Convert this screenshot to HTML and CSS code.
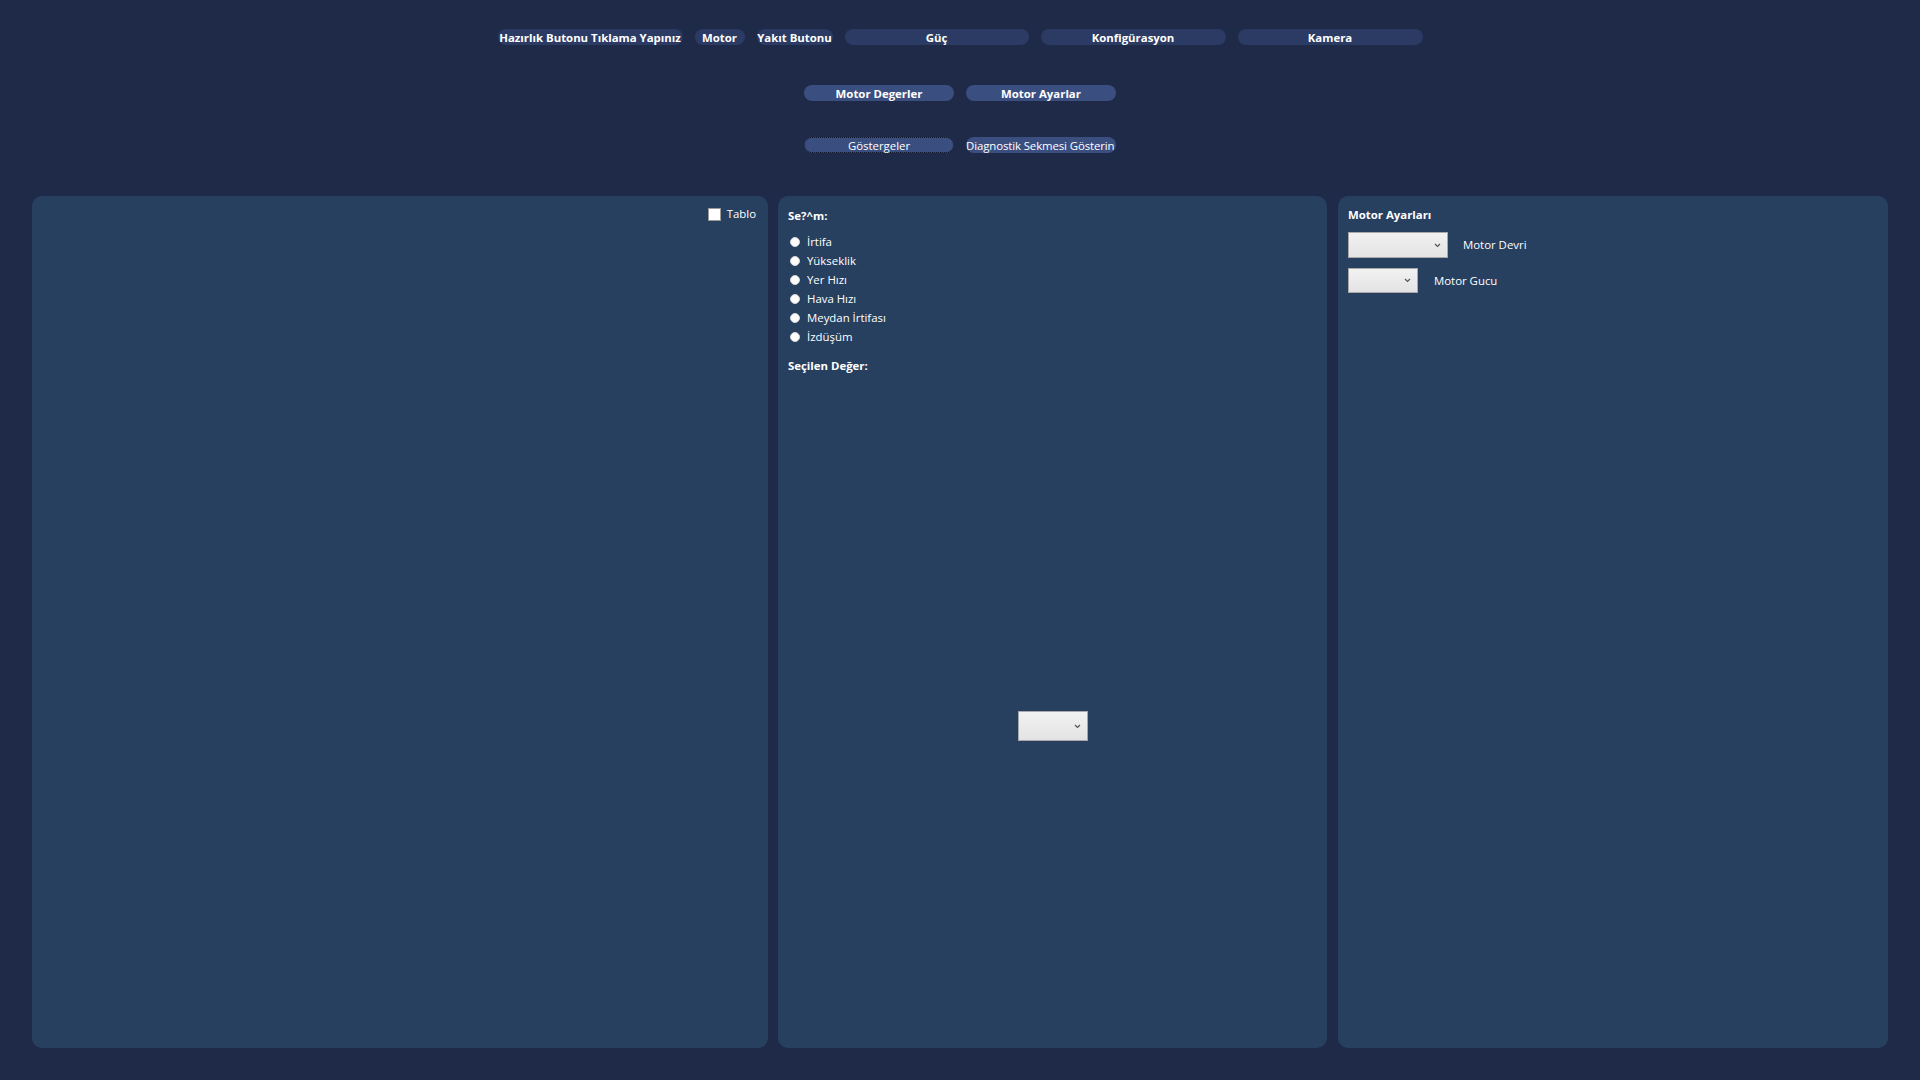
FILE: index.html
```html
<!DOCTYPE html>
<html lang="tr">
<head>
<meta charset="utf-8">
<title>Motor</title>
<link rel="stylesheet" href="styles.css">
</head>
<body>
<div class="page">
  <div class="row row-top">
    <div class="btn btn-top w185">Hazırlık Butonu Tıklama Yapınız</div>
    <div class="btn btn-top w50">Motor</div>
    <div class="btn btn-top w76">Yakıt Butonu</div>
    <div class="btn btn-top w184">Güç</div>
    <div class="btn btn-top w185">Konfigürasyon</div>
    <div class="btn btn-top w185">Kamera</div>
  </div>
  <div class="row row-mid">
    <div class="btn btn-mid">Motor Degerler</div>
    <div class="btn btn-mid">Motor Ayarlar</div>
  </div>
  <div class="row row-low">
    <div class="btn btn-low focused">Göstergeler</div>
    <div class="btn btn-low clip"><span>Diagnostik Sekmesi Gösterin</span></div>
  </div>
  <div class="panels">
    <div class="panel panel-left">
      <label class="check"><span class="box"></span><span>Tablo</span></label>
    </div>
    <div class="panel panel-mid">
      <div class="heading">Se?^m:</div>
      <ul class="radios">
        <li><span class="radio"></span>İrtifa</li>
        <li><span class="radio"></span>Yükseklik</li>
        <li><span class="radio"></span>Yer Hızı</li>
        <li><span class="radio"></span>Hava Hızı</li>
        <li><span class="radio"></span>Meydan İrtifası</li>
        <li><span class="radio"></span>İzdüşüm</li>
      </ul>
      <div class="heading sel">Seçilen Değer:</div>
      <div class="combo combo-mid"><svg class="chev" width="7" height="5" viewBox="0 0 7 5"><path d="M1 1 L3.5 3.5 L6 1" fill="none" stroke="#555" stroke-width="1.2"/></svg></div>
    </div>
    <div class="panel panel-right">
      <div class="heading">Motor Ayarları</div>
      <div class="field f1">
        <div class="combo combo-w100"><svg class="chev" width="7" height="5" viewBox="0 0 7 5"><path d="M1 1 L3.5 3.5 L6 1" fill="none" stroke="#555" stroke-width="1.2"/></svg></div>
        <span class="flabel">Motor Devri</span>
      </div>
      <div class="field f2">
        <div class="combo combo-w70"><svg class="chev" width="7" height="5" viewBox="0 0 7 5"><path d="M1 1 L3.5 3.5 L6 1" fill="none" stroke="#555" stroke-width="1.2"/></svg></div>
        <span class="flabel">Motor Gucu</span>
      </div>
    </div>
  </div>
</div>
</body>
</html>
```
FILE: styles.css
```css
* { box-sizing: border-box; }
html, body { margin: 0; padding: 0; }
body {
  background: #1f2a48;
  color: #ffffff;
  font-family: "Open Sans", "Noto Sans", sans-serif;
  font-size: 11.4px;
  width: 1920px;
  height: 1080px;
  overflow: hidden;
}
.page {
  display: flex;
  flex-direction: column;
  padding: 29px 32px 0;
  height: 1080px;
}
.row {
  display: flex;
  justify-content: center;
  gap: 12px;
}
.row-mid { margin-top: 40px; }
.row-low { margin-top: 36px; }
.btn {
  height: 16px;
  border-radius: 8px;
  display: flex;
  align-items: center;
  justify-content: center;
  white-space: nowrap;
  line-height: 16px;
  padding-top: 1px;
}
.btn-top { background: #2c3b64; font-weight: 700; }
.w185 { width: 185px; }
.w184 { width: 184px; }
.w50 { width: 50px; }
.w76 { width: 76px; }
.btn-mid { background: #3b4e80; font-weight: 700; width: 150px; }
.btn-low { background: #3b4e80; width: 150px; font-weight: 400; }
.focused { border: 1px dotted #0d1326; }
.clip { overflow: hidden; justify-content: flex-start; }
.clip span { letter-spacing: -0.1px; }
.panels {
  margin-top: 43px;
  display: grid;
  grid-template-columns: 736px 549px 1fr;
  column-gap: 10px;
  height: 852px;
}
.panel {
  background: #274060;
  border-radius: 10px;
}
.panel-left {
  display: flex;
  justify-content: flex-end;
  align-items: flex-start;
  padding: 11px 12px;
}
.check { display: flex; align-items: center; gap: 6px; line-height: 14px; }
.box { width: 13px; height: 13px; background: #fff; border: 1px solid #9a9a9a; }
.panel-mid {
  display: flex;
  flex-direction: column;
  padding: 12px 10px;
}
.heading { font-weight: 700; line-height: 16px; }
.radios { list-style: none; margin: 8px 0 0; padding: 0; }
.radios li {
  height: 19px;
  display: flex;
  align-items: center;
  gap: 7px;
  padding-left: 2px;
}
.radio {
  width: 10px;
  height: 10px;
  border-radius: 50%;
  background: #fdfdfd;
  border: 1px solid #d6d6d6;
}
.sel { margin-top: 12px; }
.combo {
  background: linear-gradient(#f2f2f2, #e3e3e3);
  border: 1px solid #a8a8a8;
  display: flex;
  align-items: center;
  justify-content: flex-end;
  padding-right: 6px;
}
.combo-mid { width: 70px; height: 30px; align-self: center; margin-top: 337px; }
.panel-right {
  display: flex;
  flex-direction: column;
  padding: 11px 10px;
  margin-left: 1px;
}
.field { display: flex; align-items: center; }
.f1 { margin-top: 9px; gap: 15px; }
.f2 { margin-top: 10px; gap: 16px; }
.combo-w100 { width: 100px; height: 26px; }
.combo-w70 { width: 70px; height: 25px; }
.flabel { line-height: 16px; }
```
